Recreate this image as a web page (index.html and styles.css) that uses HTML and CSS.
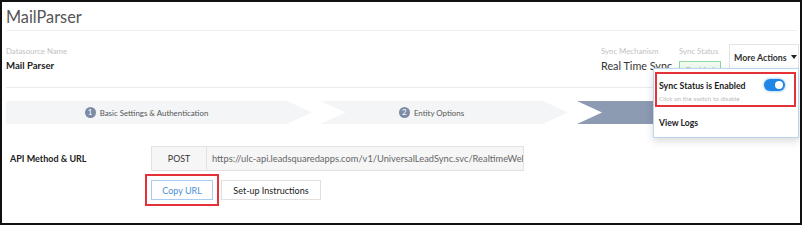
FILE: index.html
```html
<!DOCTYPE html>
<html>
<head>
<meta charset="utf-8">
<link rel="stylesheet" href="styles.css">
</head>
<body>
<div class="frame">
  <div class="title">MailParser</div>
  <div class="info">
    <div class="ds">
      <div class="lbl">Datasource Name</div>
      <div class="val">Mail Parser</div>
    </div>
    <div class="right">
      <div class="mech">
        <div class="lbl">Sync Mechanism</div>
        <div class="val2">Real Time Sync</div>
      </div>
      <div class="status">
        <div class="lbl">Sync Status</div>
        <span class="badge">Enabled</span>
      </div>
      <div class="more">
        <div class="more-btn">More Actions <span class="caret"></span></div>
        <div class="dropdown">
          <div class="dd-item hl">
            <div class="dd-row">
              <span class="dd-title">Sync Status is Enabled</span>
              <span class="toggle"><span class="knob"></span></span>
            </div>
            <div class="dd-sub">Click on the switch to disable</div>
          </div>
          <div class="dd-item logs">View Logs</div>
        </div>
      </div>
    </div>
  </div>
  <div class="steps">
    <div class="step s1"><span class="num">1</span><span class="stxt">Basic Settings &amp; Authentication</span></div>
    <div class="step s2"><span class="num">2</span><span class="stxt">Entity Options</span></div>
    <div class="step s3"></div>
  </div>
  <div class="api">
    <div class="api-lbl">API Method &amp; URL</div>
    <div class="api-main">
      <div class="url-row">
        <div class="method">POST</div>
        <div class="url">https://ulc-api.leadsquaredapps.com/v1/UniversalLeadSync.svc/RealtimeWebhook</div>
      </div>
      <div class="btn-row">
        <button class="btn copy">Copy URL</button>
        <button class="btn setup">Set-up Instructions</button>
      </div>
    </div>
  </div>
</div>
</body>
</html>
```

FILE: styles.css
```css
* { box-sizing: border-box; }
html, body { margin: 0; padding: 0; background: #fff; }
body { font-family: "Lato", "Open Sans", sans-serif; color: #333; white-space: nowrap; }
.frame {
  width: 802px;
  height: 225px;
  border: 2px solid #111;
  padding: 0 3px 0 4px;
  overflow: hidden;
}
.title {
  font-size: 16.3px;
  line-height: 24px;
  padding-top: 3px;
  padding-bottom: 1px;
  color: #555;
  border-bottom: 1px solid #eceef0;
}
.info {
  display: flex;
  justify-content: space-between;
  padding-top: 14px;
  padding-bottom: 8px;
  border-bottom: 1px solid #e8ecf0;
}
.lbl { font-size: 7.8px; line-height: 12px; color: #c2c2c2; }
.val { font-size: 9.6px; font-weight: 700; line-height: 15px; margin-top: 1px; color: #222; }
.right { display: flex; align-items: flex-start; margin-right: -2px; }
.mech { width: 78px; }
.val2 { font-size: 10.8px; line-height: 16px; margin-top: 1px; color: #333; }
.status { width: 50px; }
.badge {
  display: inline-block;
  margin-top: 3px;
  border: 1px solid #93d6a0;
  background: #f1fbf2;
  color: #7cc48a;
  font-size: 8px;
  line-height: 16px;
  padding: 0 6px;
}
.more { position: relative; margin-top: -1px; }
.more-btn {
  width: 70px;
  height: 26px;
  border: 1px solid #e4e4e4;
  font-size: 8.8px;
  font-weight: 700;
  color: #333;
  display: flex;
  align-items: center;
  padding-left: 4px;
  gap: 4px;
}
.caret {
  width: 0; height: 0;
  border-left: 3.5px solid transparent;
  border-right: 3.5px solid transparent;
  border-top: 4px solid #222;
}
.dropdown {
  position: absolute;
  right: 0;
  top: 24px;
  width: 146px;
  height: 70px;
  background: #fff;
  border: 1px solid #b9d5ef;
  box-shadow: 0 3px 8px rgba(0,0,0,0.15);
  padding: 3px 2px 0 1px;
  z-index: 5;
}
.dd-item.hl {
  height: 35px;
  border: 2px solid #e53238;
  padding: 5px 0 0 2px;
}
.dd-row { display: flex; align-items: center; justify-content: space-between; padding-right: 9px; }
.dd-title { font-size: 8.8px; font-weight: 700; color: #222; line-height: 14px; }
.toggle {
  width: 21px; height: 12px;
  border-radius: 6px;
  background: #1f86e8;
  box-shadow: 0 0 2px 1px rgba(31,134,232,0.3);
  position: relative;
  margin-top: -2px;
}
.knob {
  position: absolute;
  right: 2px; top: 2px;
  width: 8px; height: 8px;
  border-radius: 50%;
  background: #fff;
}
.dd-sub { font-size: 6.3px; color: #bbb; line-height: 10px; margin-top: 1px; }
.logs { font-size: 8.6px; font-weight: 700; color: #222; padding: 11px 0 0 4px; }
.steps {
  display: flex;
  margin-top: 13px;
  height: 23px;
}
.step {
  height: 23px;
  display: flex;
  align-items: center;
  justify-content: center;
  background: #f4f5f7;
  font-size: 7.9px;
  color: #555;
}
.s1 {
  width: 306px;
  padding-right: 25px;
  clip-path: polygon(0 0, calc(100% - 25px) 0, 100% 50%, calc(100% - 25px) 100%, 0 100%);
}
.s2 {
  width: 248px;
  margin-left: 8px;
  padding-right: 25px;
  clip-path: polygon(0 0, calc(100% - 25px) 0, 100% 50%, calc(100% - 25px) 100%, 0 100%, 26px 50%);
}
.s3 {
  flex: 1;
  margin-left: 9px;
  background: #8c9ab2;
  clip-path: polygon(0 0, 100% 0, 100% 100%, 0 100%, 25px 50%);
}
.num {
  width: 11px; height: 11px;
  border-radius: 50%;
  background: #7d8ca6;
  color: #fff;
  font-size: 8px;
  line-height: 11px;
  text-align: center;
  margin-right: 4px;
}
.api {
  display: flex;
  margin-top: 22px;
  padding-bottom: 23px;
  border-bottom: 1px solid #eeeeee;
}
.api-lbl {
  width: 145px;
  padding-left: 4px;
  font-size: 9px;
  font-weight: 700;
  color: #222;
  line-height: 25px;
}
.url-row { display: flex; height: 25px; }
.method {
  width: 56px;
  border: 1px solid #e2e2e2;
  background: #f6f6f6;
  font-size: 8.8px;
  color: #333;
  text-align: center;
  line-height: 23px;
}
.url {
  width: 317px;
  border: 1px solid #e2e2e2;
  border-left: none;
  background: #f6f6f6;
  font-size: 9.3px;
  color: #666;
  line-height: 23px;
  padding-left: 5px;
  overflow: hidden;
}
.btn-row { display: flex; gap: 8px; margin-top: 9px; }
.btn {
  height: 20px;
  font-family: "Lato", "Open Sans", sans-serif;
  font-size: 9px;
  background: #fff;
  padding: 0;
  margin: 0;
  white-space: nowrap;
}
.copy {
  width: 62px;
  border: 1px solid #a9cdf0;
  color: #4a8fd8;
  outline: 2px solid #e53238;
  outline-offset: 4px;
}
.setup {
  width: 100px;
  border: 1px solid #e0e0e0;
  color: #222;
}
```
